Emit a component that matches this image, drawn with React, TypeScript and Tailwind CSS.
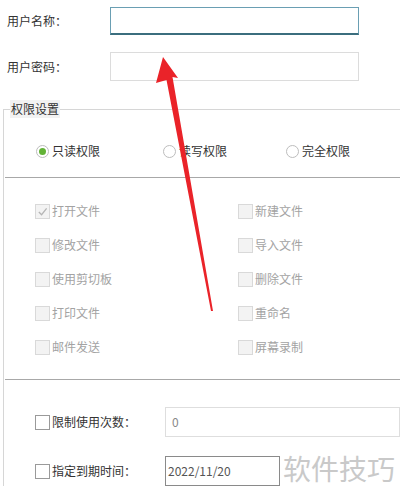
import React from 'react';

const font = { fontFamily: '"Noto Sans CJK SC", "Noto Sans", sans-serif' };

function Radio({ checked, label, width }: { checked?: boolean; label: string; width: string }) {
  return (
    <div className={`flex items-center gap-[3px] ${width}`}>
      <span className="flex h-[13px] w-[13px] items-center justify-center rounded-full border border-[#bdbdbd] bg-white">
        {checked && <span className="h-[7px] w-[7px] rounded-full bg-[#62b236]" />}
      </span>
      <span className="text-[12px] leading-none text-[#333]">{label}</span>
    </div>
  );
}

function Check({ checked, label, dim = true }: { checked?: boolean; label: string; dim?: boolean }) {
  return (
    <div className="flex h-[34px] items-center gap-[2px]">
      <span
        className={`flex h-[15px] w-[15px] items-center justify-center border ${
          dim ? 'border-[#d9d9d9] bg-[#f3f3f3]' : 'border-[#9a9a9a] bg-white'
        }`}
      >
        {checked && (
          <svg viewBox="0 0 12 12" className="h-[11px] w-[11px]">
            <path d="M2 6.5 L5 9.5 L10.5 2.5" fill="none" stroke="#b5b5b5" strokeWidth="1.4" />
          </svg>
        )}
      </span>
      <span className={`text-[12px] leading-none ${dim ? 'text-[#a3a3a3]' : 'text-[#333]'}`}>{label}</span>
    </div>
  );
}

export default function App() {
  const left = ['打开文件', '修改文件', '使用剪切板', '打印文件', '邮件发送'];
  const right = ['新建文件', '导入文件', '删除文件', '重命名', '屏幕录制'];

  return (
    <div className="relative h-[500px] w-[400px] overflow-hidden bg-white" style={font}>
      {/* Account fields */}
      <div className="pt-[7px]">
        <div className="flex items-center">
          <span className="w-[110px] pl-[7px] text-[12px] text-[#333]">用户名称：</span>
          <div className="h-[28px] w-[249px] border border-b-2 border-[#6a9fb3] border-b-[#3b6e7e] bg-white" />
        </div>
        <div className="mt-[17px] flex items-center">
          <span className="w-[110px] pl-[7px] text-[12px] text-[#333]">用户密码：</span>
          <div className="h-[29px] w-[249px] border border-[#dcdcdc] bg-white" />
        </div>
      </div>

      {/* Permission group */}
      <fieldset className="ml-[3px] mt-[19px] border-l border-t border-[#d6d6d6]">
        <legend className="ml-[6px] h-[18px] bg-[#f2f2f2] px-px text-[12px] leading-[18px] text-[#333]">
          权限设置
        </legend>

        <div className="mt-[23px] flex h-[20px] items-center pl-[32px]">
          <Radio checked label="只读权限" width="w-[127px]" />
          <Radio label="读写权限" width="w-[123px]" />
          <Radio label="完全权限" width="w-[100px]" />
        </div>

        <div className="ml-px mt-[16px] h-px bg-[#a8a8a8]" />

        <div className="mt-[16px] flex pl-[31px]">
          <div className="w-[203px]">
            {left.map((l, i) => (
              <Check key={l} label={l} checked={i === 0} />
            ))}
          </div>
          <div>
            {right.map((l) => (
              <Check key={l} label={l} />
            ))}
          </div>
        </div>

        <div className="ml-px mt-[15px] h-px bg-[#a8a8a8]" />

        <div className="mt-[27px] flex items-center pl-[31px]">
          <div className="flex w-[130px] items-center gap-[2px]">
            <span className="h-[15px] w-[15px] border border-[#9a9a9a] bg-white" />
            <span className="text-[12px] text-[#333]">限制使用次数：</span>
          </div>
          <div className="flex h-[30px] flex-1 items-center border border-[#dedede] pl-[6px] text-[12px] text-[#888]">
            0
          </div>
        </div>

        <div className="mt-[19px] flex items-center pl-[31px]">
          <div className="flex w-[130px] items-center gap-[2px]">
            <span className="h-[15px] w-[15px] border border-[#9a9a9a] bg-white" />
            <span className="text-[12px] text-[#333]">指定到期时间：</span>
          </div>
          <div className="flex h-[30px] w-[115px] items-center border border-[#8a8a8a] pl-[2px] text-[12px] text-[#555]">
            2022/11/20
          </div>
        </div>
      </fieldset>

      {/* Watermark */}
      <span className="absolute left-[283px] top-[450px] text-[28px] leading-[36px] text-[#c9c9c9]">软件技巧</span>

      {/* Red arrow annotation */}
      <svg className="pointer-events-none absolute left-0 top-0" width="400" height="500" viewBox="0 0 400 500">
        <polygon
          points="163,57 178,78 172.5,77 213,311 211,311 166.5,80 156,83"
          fill="#ea2329"
        />
      </svg>
    </div>
  );
}
